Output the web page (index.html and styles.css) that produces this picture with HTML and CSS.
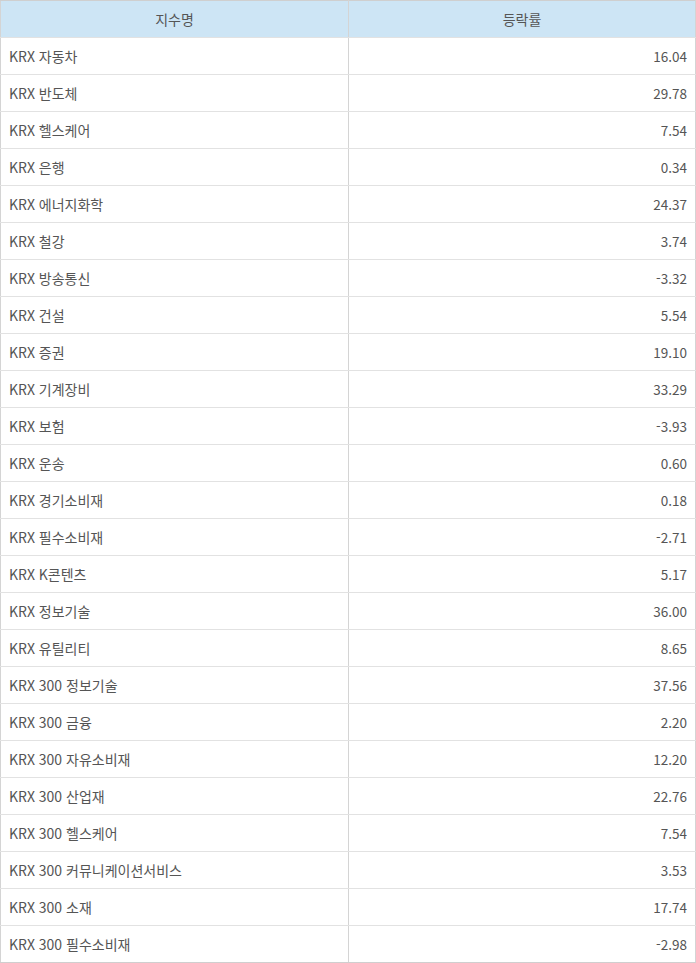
FILE: index.html
```html
<!DOCTYPE html>
<html lang="ko">
<head>
<meta charset="utf-8">
<link rel="stylesheet" href="styles.css">
</head>
<body>
<table class="idx">
<thead><tr><th>지수명</th><th>등락률</th></tr></thead>
<tbody>
<tr><td>KRX 자동차</td><td class="num">16.04</td></tr>
<tr><td>KRX 반도체</td><td class="num">29.78</td></tr>
<tr><td>KRX 헬스케어</td><td class="num">7.54</td></tr>
<tr><td>KRX 은행</td><td class="num">0.34</td></tr>
<tr><td>KRX 에너지화학</td><td class="num">24.37</td></tr>
<tr><td>KRX 철강</td><td class="num">3.74</td></tr>
<tr><td>KRX 방송통신</td><td class="num">-3.32</td></tr>
<tr><td>KRX 건설</td><td class="num">5.54</td></tr>
<tr><td>KRX 증권</td><td class="num">19.10</td></tr>
<tr><td>KRX 기계장비</td><td class="num">33.29</td></tr>
<tr><td>KRX 보험</td><td class="num">-3.93</td></tr>
<tr><td>KRX 운송</td><td class="num">0.60</td></tr>
<tr><td>KRX 경기소비재</td><td class="num">0.18</td></tr>
<tr><td>KRX 필수소비재</td><td class="num">-2.71</td></tr>
<tr><td>KRX K콘텐츠</td><td class="num">5.17</td></tr>
<tr><td>KRX 정보기술</td><td class="num">36.00</td></tr>
<tr><td>KRX 유틸리티</td><td class="num">8.65</td></tr>
<tr><td>KRX 300 정보기술</td><td class="num">37.56</td></tr>
<tr><td>KRX 300 금융</td><td class="num">2.20</td></tr>
<tr><td>KRX 300 자유소비재</td><td class="num">12.20</td></tr>
<tr><td>KRX 300 산업재</td><td class="num">22.76</td></tr>
<tr><td>KRX 300 헬스케어</td><td class="num">7.54</td></tr>
<tr><td>KRX 300 커뮤니케이션서비스</td><td class="num">3.53</td></tr>
<tr><td>KRX 300 소재</td><td class="num">17.74</td></tr>
<tr><td>KRX 300 필수소비재</td><td class="num">-2.98</td></tr>
</tbody>
</table>
</body>
</html>
```
FILE: styles.css
```css
html, body { margin: 0; padding: 0; background: #fff; }
.idx {
  width: 696px;
  border-collapse: collapse;
  table-layout: fixed;
  font-family: "Noto Sans CJK KR", "Noto Sans", sans-serif;
  font-size: 14px;
  color: #555;
}
.idx th, .idx td {
  height: 37px;
  padding: 0 8px;
  box-sizing: border-box;
  border: 1px solid #d4d4d4;
  border-top-color: #e2e2e2;
  border-bottom-color: #e2e2e2;
  font-weight: normal;
}
.idx th {
  background: #cde5f5;
  text-align: center;
  border-top-color: #cfcfcf;
}
.idx tbody tr:last-child td { border-bottom-color: #cfcfcf; }
.idx th:first-child, .idx td:first-child { width: 348px; }
.idx td { text-align: left; }
.idx td.num { text-align: right; font-size: 13.5px; }
```
